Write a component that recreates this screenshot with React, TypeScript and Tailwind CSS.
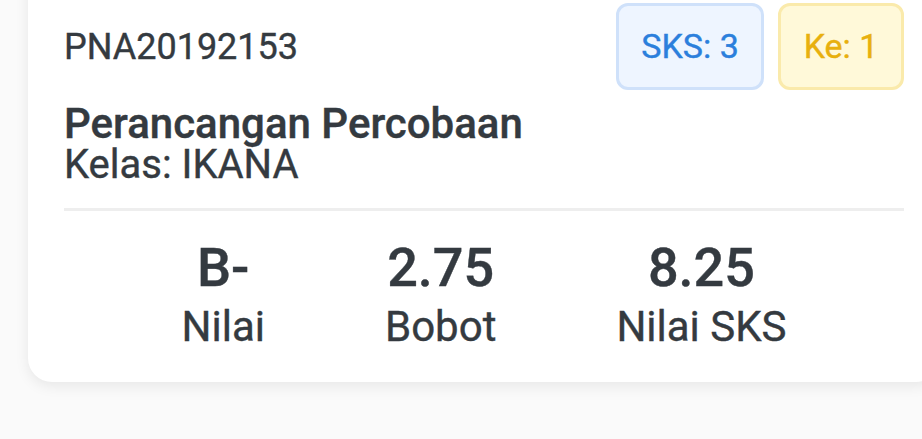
export default function App() {
  const stats = [
    { value: "B-", label: "Nilai" },
    { value: "2.75", label: "Bobot" },
    { value: "8.25", label: "Nilai SKS" },
  ];

  return (
    <div className="w-[922px] h-[439px] overflow-hidden bg-[#fafafa] font-['Roboto',sans-serif] text-[#343a40] [-webkit-text-stroke:0.4px]">
      <div className="ml-[28px] mr-[-18px] mt-[-33px] bg-white rounded-[24px] shadow-[0_4px_14px_rgba(0,0,0,0.08)] px-[36px] pt-[36px] pb-[34px]">
        <div className="flex items-center justify-between">
          <div className="text-[36px] leading-none">PNA20192153</div>
          <div className="flex gap-[14px]">
            <div className="h-[87px] w-[148px] flex items-center justify-center rounded-[12px] border-[3px] border-[#cfe1fa] bg-[#eef5ff] text-[#2b7fdc] text-[34px]">
              SKS: 3
            </div>
            <div className="h-[87px] w-[126px] flex items-center justify-center rounded-[12px] border-[3px] border-[#faeaab] bg-[#fff9d9] text-[#e8b00e] text-[34px]">
              Ke: 1
            </div>
          </div>
        </div>

        <div className="mt-[13px] text-[42px] font-medium leading-[1]">Perancangan Percobaan</div>
        <div className="text-[40px] leading-[1]">Kelas: IKANA</div>

        <div className="mt-[23px] h-[3px] bg-[#eeeeee]" />

        <div className="mt-[30px] flex justify-center gap-[120px]">
          {stats.map(s => (
            <div key={s.label} className="flex flex-col items-center">
              <div className="text-[54px] font-medium leading-[1]">{s.value}</div>
              <div className="mt-[11px] text-[42px] leading-[1]">{s.label}</div>
            </div>
          ))}
        </div>
      </div>
    </div>
  );
}
